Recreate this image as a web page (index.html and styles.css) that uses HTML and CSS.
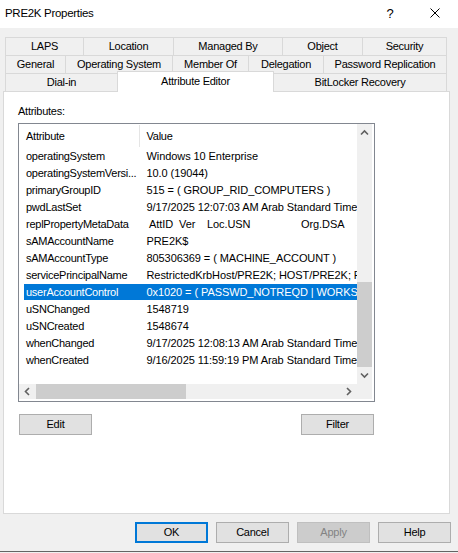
FILE: index.html
```html
<!DOCTYPE html>
<html>
<head>
<meta charset="utf-8">
<link rel="stylesheet" href="styles.css">
</head>
<body>
<div class="window">
  <div class="titlebar">
    <span class="title">PRE2K Properties</span>
    <span class="help">?</span>
    <span class="close"><svg width="10" height="10" viewBox="0 0 10 10"><path d="M0.5 0.5 L9.5 9.5 M9.5 0.5 L0.5 9.5" stroke="#000" stroke-width="1" fill="none"/></svg></span>
  </div>

  <div class="tabs">
    <div class="tabrow row1">
      <div class="tab">LAPS</div>
      <div class="tab">Location</div>
      <div class="tab">Managed By</div>
      <div class="tab">Object</div>
      <div class="tab">Security</div>
    </div>
    <div class="tabrow row2">
      <div class="tab">General</div>
      <div class="tab">Operating System</div>
      <div class="tab">Member Of</div>
      <div class="tab">Delegation</div>
      <div class="tab">Password Replication</div>
    </div>
    <div class="tabrow row3">
      <div class="tab">Dial-in</div>
      <div class="tab selected">Attribute Editor</div>
      <div class="tab">BitLocker Recovery</div>
    </div>
  </div>

  <div class="panel">
    <div class="label">Attributes:</div>
    <div class="list">
      <div class="list-top">
        <div class="listview">
          <div class="header">
            <div class="hcell hattr">Attribute</div>
            <div class="sep"></div>
            <div class="hcell hval">Value</div>
          </div>
          <div class="rows">
            <div class="row"><div class="item"><div class="c-attr">operatingSystem</div><div class="c-val">Windows 10 Enterprise</div></div></div>
            <div class="row"><div class="item"><div class="c-attr">operatingSystemVersi...</div><div class="c-val">10.0 (19044)</div></div></div>
            <div class="row"><div class="item"><div class="c-attr">primaryGroupID</div><div class="c-val">515 = ( GROUP_RID_COMPUTERS )</div></div></div>
            <div class="row"><div class="item"><div class="c-attr">pwdLastSet</div><div class="c-val">9/17/2025 12:07:03 AM Arab Standard Time</div></div></div>
            <div class="row"><div class="item"><div class="c-attr">replPropertyMetaData</div><div class="c-val"><span class="m1">AttID</span><span class="m2">Ver</span><span class="m3">Loc.USN</span><span class="m4">Org.DSA</span></div></div></div>
            <div class="row"><div class="item"><div class="c-attr">sAMAccountName</div><div class="c-val">PRE2K$</div></div></div>
            <div class="row"><div class="item"><div class="c-attr">sAMAccountType</div><div class="c-val">805306369 = ( MACHINE_ACCOUNT )</div></div></div>
            <div class="row"><div class="item"><div class="c-attr">servicePrincipalName</div><div class="c-val">RestrictedKrbHost/PRE2K; HOST/PRE2K; RestrictedKrbHost/PRE2K</div></div></div>
            <div class="row"><div class="item selected-item"><div class="c-attr">userAccountControl</div><div class="c-val">0x1020 = ( PASSWD_NOTREQD | WORKSTATION_TRUST_ACCOUNT )</div></div></div>
            <div class="row"><div class="item"><div class="c-attr">uSNChanged</div><div class="c-val">1548719</div></div></div>
            <div class="row"><div class="item"><div class="c-attr">uSNCreated</div><div class="c-val">1548674</div></div></div>
            <div class="row"><div class="item"><div class="c-attr">whenChanged</div><div class="c-val">9/17/2025 12:08:13 AM Arab Standard Time</div></div></div>
            <div class="row"><div class="item"><div class="c-attr">whenCreated</div><div class="c-val">9/16/2025 11:59:19 PM Arab Standard Time</div></div></div>
          </div>
        </div>
        <div class="vscroll">
          <div class="arrow-v"><svg width="15" height="17" viewBox="0 0 15 17"><polyline points="4,10.5 7.5,7 11,10.5" stroke="#606060" stroke-width="1.6" fill="none"/></svg></div>
          <div class="v-space"></div>
          <div class="v-thumb"></div>
          <div class="arrow-v"><svg width="15" height="17" viewBox="0 0 15 17"><polyline points="4,6.5 7.5,10 11,6.5" stroke="#606060" stroke-width="1.6" fill="none"/></svg></div>
        </div>
      </div>
      <div class="list-bottom">
        <div class="hscroll">
          <div class="arrow-h"><svg width="17" height="15" viewBox="0 0 17 15"><polyline points="10,4 6.5,7.5 10,11" stroke="#606060" stroke-width="1.6" fill="none"/></svg></div>
          <div class="h-thumb"></div>
          <div class="h-space"></div>
          <div class="arrow-h"><svg width="17" height="15" viewBox="0 0 17 15"><polyline points="7,4 10.5,7.5 7,11" stroke="#606060" stroke-width="1.6" fill="none"/></svg></div>
        </div>
        <div class="corner"></div>
      </div>
    </div>
    <div class="list-buttons">
      <button class="btn">Edit</button>
      <button class="btn">Filter</button>
    </div>
  </div>

  <div class="dialog-buttons">
    <button class="btn btn-default">OK</button>
    <button class="btn">Cancel</button>
    <button class="btn btn-disabled">Apply</button>
    <button class="btn">Help</button>
  </div>
</div>
</body>
</html>
```

FILE: styles.css
```css
html, body {
  margin: 0;
  padding: 0;
}

body {
  width: 458px;
  height: 553px;
  overflow: hidden;
  background: #f0f0f0;
  font-family: "Liberation Sans", Arial, sans-serif;
  font-size: 11px;
  letter-spacing: -0.25px;
  color: #000;
}

.window {
  height: 552px;
  box-sizing: border-box;
  border-bottom: 1px solid #646464;
}

/* title bar */
.titlebar {
  height: 28px;
  box-sizing: border-box;
  padding-bottom: 2px;
  background: #fff;
  display: flex;
  align-items: center;
}

.title {
  margin-left: 5px;
  font-size: 11.5px;
  letter-spacing: -0.3px;
}

.help {
  margin-left: auto;
  width: 10px;
  text-align: center;
  font-size: 13px;
  letter-spacing: 0;
}

.close {
  display: flex;
  margin-left: 35px;
  margin-right: 18px;
}

/* tabs */
.tabs {
  margin: 9px 0 0 5px;
  width: 442px;
}

.tabrow {
  display: grid;
  height: 18px;
}

.row1 { grid-template-columns: 78px 90px 109px 80px 85px; }
.row2 { grid-template-columns: 60px 107px 76px 75px 124px; }
.row3 { grid-template-columns: 112px 156px 174px; }

.tab {
  box-sizing: border-box;
  height: 18px;
  border-top: 1px solid #d9d9d9;
  border-left: 1px solid #d9d9d9;
  text-align: center;
  line-height: 17px;
  white-space: nowrap;
  background: #f0f0f0;
}

.tab:last-child {
  border-right: 1px solid #d9d9d9;
}

.tab.selected {
  position: relative;
  z-index: 1;
  height: 21px;
  margin-top: -2px;
  margin-right: -1px;
  border-right: 1px solid #d9d9d9;
  background: #fff;
  line-height: 18px;
}

/* panel */
.panel {
  box-sizing: border-box;
  margin-left: 3px;
  width: 447px;
  height: 423px;
  border: 1px solid #d9d9d9;
  background: #fff;
  padding: 13px 0 0 14px;
}

.label {
  height: 13px;
  line-height: 13px;
}

.list {
  margin-top: 5px;
  box-sizing: border-box;
  width: 357px;
  height: 279px;
  border: 1px solid #828790;
  padding: 0 2px 2px 0;
  background: #fff;
}

.list-top {
  display: flex;
  height: 260px;
}

.listview {
  width: 338px;
  overflow: hidden;
}

.header {
  display: flex;
  height: 24px;
}

.hcell {
  line-height: 25px;
  white-space: nowrap;
}

.hattr {
  width: 120px;
  box-sizing: border-box;
  padding-left: 7px;
}

.sep {
  width: 1px;
  height: 22px;
  margin-top: 1px;
  background: #e5e5e5;
}

.hval {
  padding-left: 6.5px;
}

.row {
  height: 17px;
  padding-left: 5px;
}

.item {
  display: flex;
  height: 16px;
  line-height: 16px;
  white-space: nowrap;
}

.selected-item {
  background: #0078d7;
  color: #fff;
}

.c-attr {
  width: 116px;
  flex: none;
  box-sizing: border-box;
  padding-left: 2px;
  overflow: hidden;
}

.c-val {
  flex: 1;
  min-width: 0;
  overflow: hidden;
  padding-left: 6.5px;
  letter-spacing: -0.08px;
}

.m1, .m2, .m3, .m4 {
  display: inline-block;
}

.m1 { margin-left: 2.5px; width: 30px; }
.m2 { width: 28px; }
.m3 { width: 94px; }

/* scrollbars */
.vscroll {
  width: 15px;
  background: #f0f0f0;
  display: flex;
  flex-direction: column;
}

.arrow-v {
  height: 17px;
  flex: none;
  display: flex;
}

.v-space {
  flex: 1;
}

.v-thumb {
  height: 85px;
  flex: none;
  background: #cdcdcd;
}

.list-bottom {
  display: flex;
  height: 15px;
}

.hscroll {
  width: 338px;
  display: flex;
  background: #f0f0f0;
}

.arrow-h {
  width: 17px;
  flex: none;
  display: flex;
}

.h-thumb {
  width: 150px;
  flex: none;
  background: #cdcdcd;
}

.h-space {
  flex: 1;
}

.corner {
  width: 15px;
  background: #f0f0f0;
}

/* buttons */
.btn {
  box-sizing: border-box;
  width: 73px;
  height: 21px;
  margin: 0;
  padding: 0;
  border: 1px solid #adadad;
  background: #e1e1e1;
  color: #000;
  font-family: inherit;
  font-size: 11px;
  letter-spacing: -0.25px;
  text-align: center;
  line-height: 19px;
}

.btn-default {
  border: 2px solid #0078d7;
  line-height: 17px;
}

.btn-disabled {
  background: #cccccc;
  border-color: #bfbfbf;
  color: #838383;
}

.list-buttons {
  display: flex;
  justify-content: space-between;
  width: 355px;
  margin: 12px 0 0 1px;
}

.dialog-buttons {
  display: flex;
  justify-content: flex-end;
  gap: 8px;
  margin-top: 8px;
  padding-right: 7px;
}
```
